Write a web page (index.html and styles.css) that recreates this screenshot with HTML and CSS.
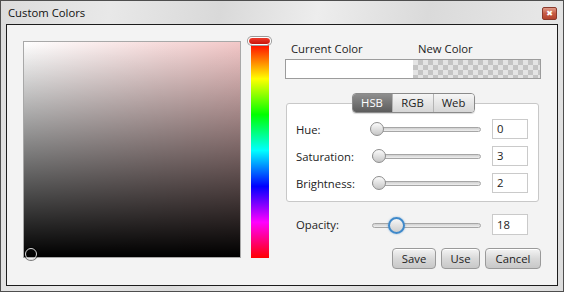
FILE: index.html
```html
<!DOCTYPE html>
<html lang="en">
<head>
  <meta charset="UTF-8">
  <title>Custom Colors</title>
  <link rel="stylesheet" href="styles.css">
</head>
<body>
  <div class="window">
    <div class="titlebar">
      <span class="title">Custom Colors</span>
      <span class="close">&#x2716;</span>
    </div>
    <div class="content">
      <div class="sb-field">
        <span class="sb-marker"></span>
      </div>
      <div class="hue-bar">
        <span class="hue-handle"></span>
      </div>
      <div class="side">
        <div class="swatch-labels">
          <span class="lbl-current">Current Color</span>
          <span class="lbl-new">New Color</span>
        </div>
        <div class="swatch">
          <div class="swatch-current"></div>
          <div class="swatch-new"></div>
        </div>
        <div class="tabs">
          <span class="tab selected">HSB</span>
          <span class="tab">RGB</span>
          <span class="tab">Web</span>
        </div>
        <div class="panel">
          <div class="row">
            <span class="label">Hue:</span>
            <div class="slider"><span class="track"></span><span class="thumb" style="left: 0px"></span></div>
            <span class="field">0</span>
          </div>
          <div class="row">
            <span class="label">Saturation:</span>
            <div class="slider"><span class="track"></span><span class="thumb" style="left: 2px"></span></div>
            <span class="field">3</span>
          </div>
          <div class="row">
            <span class="label">Brightness:</span>
            <div class="slider"><span class="track"></span><span class="thumb" style="left: 2px"></span></div>
            <span class="field">2</span>
          </div>
        </div>
        <div class="row opacity">
          <span class="label">Opacity:</span>
          <div class="slider"><span class="track"></span><span class="thumb focus" style="left: 18px"></span></div>
          <span class="field">18</span>
        </div>
        <div class="buttons">
          <button class="btn save">Save</button>
          <button class="btn use">Use</button>
          <button class="btn cancel">Cancel</button>
        </div>
      </div>
    </div>
  </div>
</body>
</html>
```

FILE: styles.css
```css
body {
  margin: 0;
  font-family: 'Open Sans', 'Noto Sans', sans-serif;
  font-size: 11.3px;
  color: #222;
}

.window {
  width: 564px;
  height: 292px;
  box-sizing: border-box;
  border: 1px solid #4e4e4e;
  padding: 0 5px 5px 5px;
  background: linear-gradient(100deg, #dcdcdc 0%, #e8e8e8 18%, #d9d9d9 36%, #ededed 52%, #dadada 70%, #e6e6e6 88%, #dcdcdc 100%);
  display: flex;
  flex-direction: column;
}

.titlebar {
  height: 23px;
  display: flex;
  justify-content: space-between;
  align-items: center;
}

.title {
  font-size: 11.3px;
  color: #111;
  margin-left: 2px;
  margin-top: -1px;
}

.close {
  width: 15px;
  height: 13px;
  box-sizing: border-box;
  margin-right: 1px;
  margin-top: 1px;
  border: 1px solid #8a3a2c;
  border-radius: 2px;
  background: linear-gradient(#e09a88, #c65b44 50%, #b4442e);
  color: #fff;
  font-size: 8px;
  line-height: 11px;
  text-align: center;
  font-family: 'DejaVu Sans', sans-serif;
}

.content {
  flex: 1;
  border: 1px solid #1c1c1c;
  background-color: #f3f3f3;
  padding: 16px 16px 0 16px;
  display: flex;
  align-items: flex-start;
}

.sb-field {
  position: relative;
  width: 218px;
  height: 217px;
  box-sizing: border-box;
  border: 1px solid #a8a8a8;
  background:
    linear-gradient(to bottom, rgba(0, 0, 0, 0), #000),
    linear-gradient(to right, #fff, #f3c8c8);
}

.sb-marker {
  position: absolute;
  left: 1px;
  top: 206px;
  width: 10px;
  height: 10px;
  border: 1.5px solid #d8d8d8;
  border-radius: 50%;
  box-shadow: 0 0 0 1px rgba(0, 0, 0, 0.5);
}

.hue-bar {
  position: relative;
  width: 18px;
  height: 215px;
  margin-left: 10px;
  margin-top: 2px;
  background: linear-gradient(to bottom, #f00 0%, #ff0 16.67%, #0f0 33.33%, #0ff 50%, #00f 66.67%, #f0f 83.33%, #f00 100%);
}

.hue-handle {
  position: absolute;
  left: -3px;
  top: -6px;
  width: 21px;
  height: 6px;
  border: 1.5px solid #fff;
  border-radius: 5px;
  box-shadow: 0 0 0 1px #9a9a9a;
  background: linear-gradient(#ee3a2a, #c8140c);
}

.side {
  width: 256px;
  margin-left: 16px;
  display: flex;
  flex-direction: column;
}

.swatch-labels {
  display: flex;
  height: 16px;
  line-height: 16px;
}

.lbl-current {
  margin-left: 6px;
  width: 127px;
}

.swatch {
  display: flex;
  height: 20px;
  margin-top: 2px;
  box-sizing: border-box;
  border: 1px solid #9c9c9c;
}

.swatch-current {
  width: 127px;
  background: #fff;
}

.swatch-new {
  flex: 1;
  background-color: #e4e4e4;
  background-image:
    linear-gradient(45deg, #c4c4c4 25%, transparent 25%, transparent 75%, #c4c4c4 75%),
    linear-gradient(45deg, #c4c4c4 25%, transparent 25%, transparent 75%, #c4c4c4 75%);
  background-size: 10px 10px;
  background-position: 0 0, 5px 5px;
}

.tabs {
  align-self: center;
  position: relative;
  z-index: 1;
  display: flex;
  margin-top: 14px;
  height: 20px;
  box-sizing: border-box;
  border: 1px solid #8a8a8a;
  border-radius: 4px;
  overflow: hidden;
  box-shadow: 0 1px 1px rgba(0, 0, 0, 0.15);
}

.tab {
  width: 40px;
  text-align: center;
  line-height: 18px;
  background: linear-gradient(#f6f6f6, #d6d6d6);
  border-left: 1px solid #b4b4b4;
  color: #222;
}

.tab:first-child {
  border-left: none;
}

.tab.selected {
  width: 39px;
  background: linear-gradient(#8e8e8e, #5c5c5c);
  color: #fff;
}

.panel {
  margin: -10px 2px 0 1px;
  padding: 15px 10px 8px 9px;
  background: #fff;
  border: 1px solid #c8c8c8;
  border-radius: 3px;
  display: flex;
  flex-direction: column;
  gap: 7px;
}

.row {
  display: grid;
  grid-template-columns: 74px 111px 47px;
  align-items: center;
  height: 20px;
}

.label {
  color: #222;
}

.slider {
  position: relative;
  height: 16px;
}

.track {
  position: absolute;
  left: 2px;
  right: 0;
  top: 6px;
  height: 5px;
  box-sizing: border-box;
  border: 1px solid #a6a6a6;
  border-radius: 3px;
  background: linear-gradient(#cfcfcf, #efefef);
}

.thumb {
  position: absolute;
  top: 1px;
  width: 14px;
  height: 14px;
  box-sizing: border-box;
  border: 1px solid #8e8e8e;
  border-radius: 50%;
  background: linear-gradient(#fbfbfb, #c6c6c6);
}

.thumb.focus {
  top: 0;
  width: 17px;
  height: 17px;
  border: 2px solid #3f89ca;
  background: linear-gradient(#f6f6f6, #cdcdcd);
  box-shadow: 0 0 2px rgba(63, 137, 202, 0.6);
}

.field {
  justify-self: end;
  width: 36px;
  height: 20px;
  box-sizing: border-box;
  border: 1px solid #cacaca;
  background: #fff;
  padding-left: 4px;
  line-height: 18px;
}

.opacity {
  margin-top: 12px;
  margin-left: 11px;
  height: 21px;
}

.opacity .field {
  height: 21px;
  line-height: 19px;
}

.buttons {
  display: flex;
  justify-content: flex-end;
  gap: 5px;
  margin-top: 13px;
}

.btn {
  height: 21px;
  padding: 0;
  font-family: inherit;
  font-size: 11.3px;
  color: #222;
  border: 1px solid #9a9a9a;
  border-radius: 4px;
  background: linear-gradient(#f4f4f4, #d9d9d9 50%, #c8c8c8);
  box-shadow: inset 0 1px 0 #fff;
}

.save {
  width: 44px;
}

.use {
  width: 39px;
}

.cancel {
  width: 56px;
}
```
